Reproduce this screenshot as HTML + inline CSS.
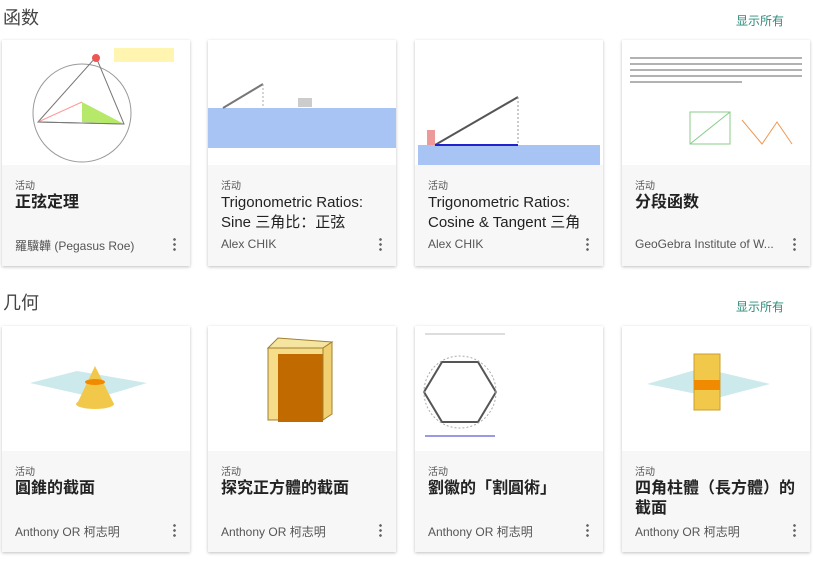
<!DOCTYPE html>
<html><head><meta charset="utf-8"><style>
*{margin:0;padding:0;box-sizing:border-box}
body{width:813px;height:566px;background:#fff;font-family:"Liberation Sans","Noto Sans CJK SC",sans-serif;position:relative;overflow:hidden;color:#333}
.h{position:absolute;font-size:18px;color:#444}
.all{position:absolute;font-size:12px;color:#2e8b7a}
.card{position:absolute;width:188px;height:226px;background:#f7f7f7;box-shadow:0 1px 3px rgba(0,0,0,.25)}
.img{height:125px;background:#fff;position:relative;overflow:hidden}
.t{position:absolute;left:13px;top:137px;font-size:10px;color:#555}
.ti{position:absolute;left:13px;top:153px;font-size:16px;font-weight:bold;color:#222;line-height:20px;width:162px}
.ti.n{font-weight:normal;color:#222;font-size:15px}
.a{position:absolute;left:13px;top:197px;font-size:12px;color:#555}
.d{position:absolute;right:14px;top:197px;width:3px;height:14px;background:radial-gradient(circle,#666 1.2px,transparent 1.5px) 0 0/3px 5px repeat-y}
svg{position:absolute;left:0;top:0}
</style></head><body>
<div class="h" style="left:3px;top:4px">函数</div>
<div class="all" style="left:736px;top:12px">显示所有</div>
<div class="h" style="left:3px;top:289px">几何</div>
<div class="all" style="left:736px;top:298px">显示所有</div>

<div class="card" style="left:2px;top:40px"><div class="img"><svg width="188" height="125"><circle cx="80" cy="73" r="49" fill="none" stroke="#999"/><polygon points="36,82 94,17 122,84" fill="none" stroke="#777"/><polygon points="80,62 80,82 122,84" fill="#b6e86a"/><line x1="36" y1="82" x2="80" y2="62" stroke="#f99"/><line x1="36" y1="82" x2="122" y2="84" stroke="#777"/><circle cx="94" cy="18" r="4" fill="#e55"/><rect x="112" y="8" width="60" height="14" fill="#fff5b0"/></svg></div>
<div class="t">活动</div><div class="ti">正弦定理</div><div class="a">羅驥韡 (Pegasus Roe)</div><div class="d"></div></div>

<div class="card" style="left:208px;top:40px"><div class="img"><svg width="188" height="125"><rect x="0" y="68" width="188" height="40" fill="#a7c4f5"/><line x1="15" y1="68" x2="55" y2="44" stroke="#777" stroke-width="2"/><line x1="55" y1="44" x2="55" y2="68" stroke="#aaa" stroke-dasharray="2"/><rect x="90" y="58" width="14" height="9" fill="#ccc"/></svg></div>
<div class="t">活动</div><div class="ti n">Trigonometric Ratios: Sine 三角比：正弦</div><div class="a">Alex CHIK</div><div class="d"></div></div>

<div class="card" style="left:415px;top:40px"><div class="img"><svg width="188" height="125"><rect x="3" y="105" width="182" height="20" fill="#a7c4f5"/><line x1="20" y1="105" x2="103" y2="57" stroke="#555" stroke-width="2"/><line x1="20" y1="105" x2="103" y2="105" stroke="#22c" stroke-width="2"/><line x1="103" y1="57" x2="103" y2="105" stroke="#999" stroke-dasharray="2"/><rect x="12" y="90" width="8" height="15" fill="#e99"/></svg></div>
<div class="t">活动</div><div class="ti n">Trigonometric Ratios: Cosine &amp; Tangent 三角</div><div class="a">Alex CHIK</div><div class="d"></div></div>

<div class="card" style="left:622px;top:40px"><div class="img"><svg width="188" height="125"><g stroke="#999" stroke-width="1.5"><line x1="8" y1="18" x2="180" y2="18"/><line x1="8" y1="24" x2="180" y2="24"/><line x1="8" y1="30" x2="180" y2="30"/><line x1="8" y1="36" x2="180" y2="36"/><line x1="8" y1="42" x2="120" y2="42"/></g><rect x="68" y="72" width="40" height="32" fill="none" stroke="#8c8"/><line x1="68" y1="104" x2="108" y2="72" stroke="#8c8"/><polyline points="120,80 140,104 155,82 170,104" fill="none" stroke="#e95"/></svg></div>
<div class="t">活动</div><div class="ti">分段函数</div><div class="a">GeoGebra Institute of W...</div><div class="d"></div></div>

<div class="card" style="left:2px;top:326px"><div class="img"><svg width="188" height="125"><polygon points="28,57 75,45 145,57 95,72" fill="#bfe3e6" opacity=".8"/><polygon points="93,40 75,78 112,78" fill="#f2c84b"/><ellipse cx="93" cy="78" rx="19" ry="5" fill="#f2c84b"/><ellipse cx="93" cy="56" rx="10" ry="3" fill="#f08a00"/></svg></div>
<div class="t">活动</div><div class="ti">圓錐的截面</div><div class="a">Anthony OR 柯志明</div><div class="d"></div></div>

<div class="card" style="left:208px;top:326px"><div class="img"><svg width="188" height="125"><rect x="60" y="22" width="55" height="72" fill="#f5dd8a" stroke="#a08030"/><rect x="70" y="28" width="45" height="68" fill="#c06a00"/><polygon points="60,22 70,12 124,16 115,22" fill="#f5e5a0" stroke="#a08030"/><polygon points="115,22 124,16 124,88 115,94" fill="#f0d070" stroke="#a08030"/></svg></div>
<div class="t">活动</div><div class="ti">探究正方體的截面</div><div class="a">Anthony OR 柯志明</div><div class="d"></div></div>

<div class="card" style="left:415px;top:326px"><div class="img"><svg width="188" height="125"><polygon points="27,36 63,36 81,66 63,96 27,96 9,66" fill="none" stroke="#555" stroke-width="2"/><circle cx="45" cy="66" r="36" fill="none" stroke="#aaa" stroke-dasharray="2"/><line x1="10" y1="110" x2="80" y2="110" stroke="#33c"/><line x1="10" y1="8" x2="90" y2="8" stroke="#bbb"/></svg></div>
<div class="t">活动</div><div class="ti">劉徽的「割圓術」</div><div class="a">Anthony OR 柯志明</div><div class="d"></div></div>

<div class="card" style="left:622px;top:326px"><div class="img"><svg width="188" height="125"><polygon points="25,58 80,42 148,58 95,72" fill="#bfe3e6" opacity=".8"/><rect x="72" y="28" width="26" height="56" fill="#f2c84b" stroke="#c9a030"/><rect x="72" y="54" width="26" height="10" fill="#f08a00"/></svg></div>
<div class="t">活动</div><div class="ti">四角柱體（長方體）的截面</div><div class="a">Anthony OR 柯志明</div><div class="d"></div></div>
</body></html>
